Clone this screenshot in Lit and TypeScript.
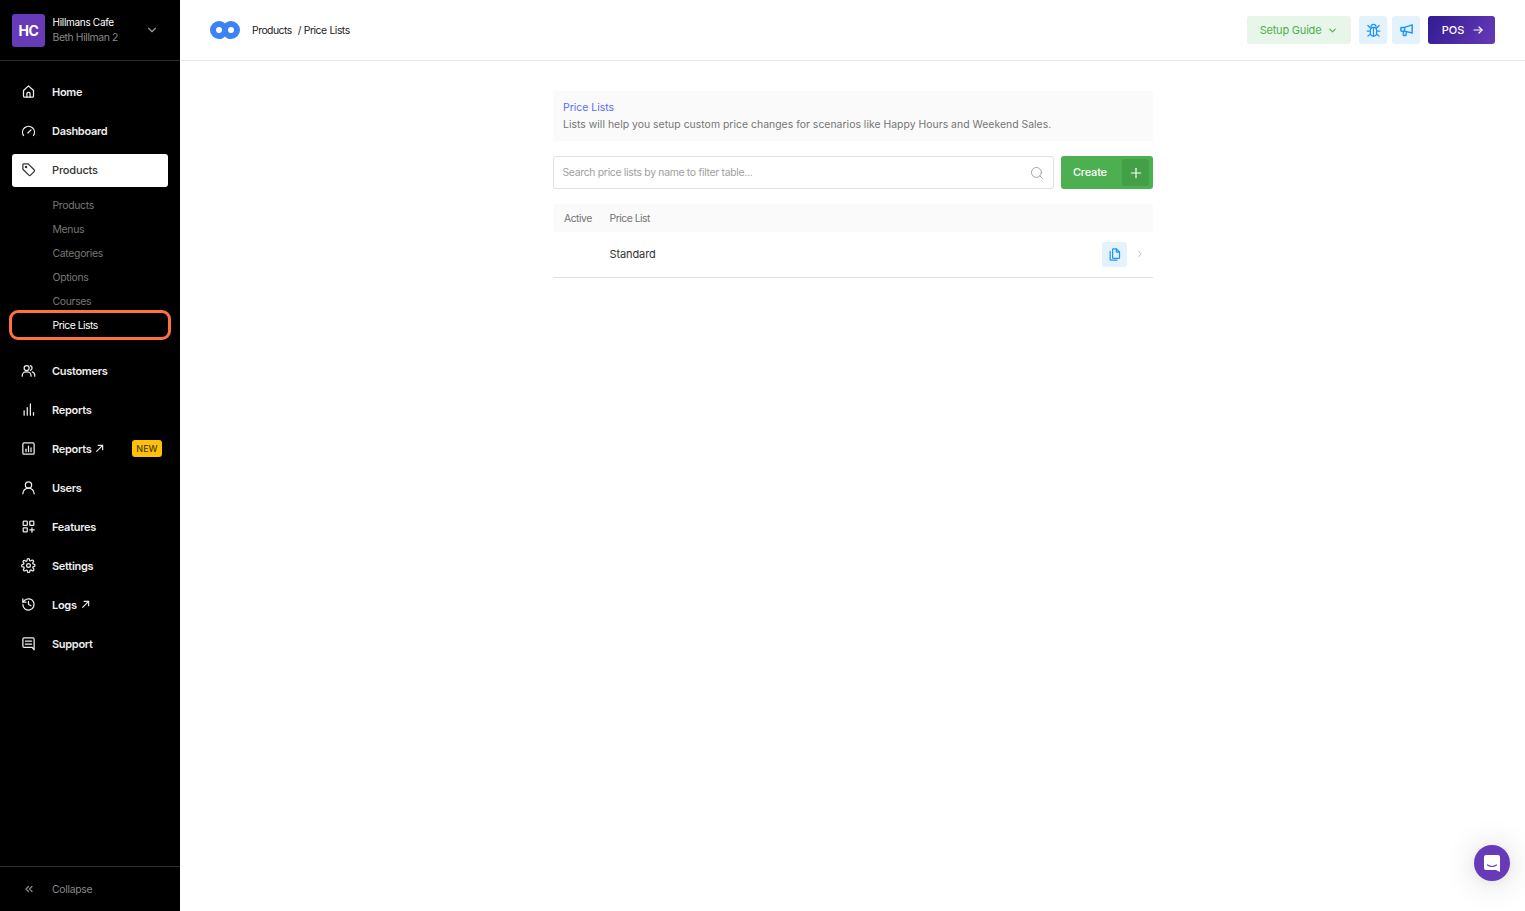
import { LitElement, html, css, svg } from "lit";
import { customElement } from "lit/decorators.js";

const ic = (body: unknown, size = 16, sw = 2) => html`<svg width=${size} height=${size} viewBox="0 0 24 24" fill="none" stroke="currentColor" stroke-width=${sw} stroke-linecap="round" stroke-linejoin="round">${body}</svg>`;

const icons: Record<string, unknown> = {
  home: svg`<path d="M4 10.500 12 3l8 7.500V19a2 2 0 0 1-2 2H6a2 2 0 0 1-2-2z"/><path d="M9.500 21v-6a1.500 1.500 0 0 1 1.500-1.500h2a1.500 1.500 0 0 1 1.500 1.500v6"/>`,
  dash: svg`<path d="M4 20a9.500 9.500 0 1 1 16 0"/><path d="m11 16 5-5"/>`,
  tag: svg`<path d="M3 4.500A1.500 1.500 0 0 1 4.500 3h7l9.500 9.500a2 2 0 0 1 0 2.800L15.300 21a2 2 0 0 1-2.800 0L3 11.500z"/><circle cx="8" cy="8" r="1"/>`,
  users: svg`<circle cx="9" cy="8" r="4"/><path d="M2 21v-1a6 6 0 0 1 6-6h2a6 6 0 0 1 6 6v1"/><path d="M15 4.200a4 4 0 0 1 0 7.600"/><path d="M18 14.300a6 6 0 0 1 4 5.700v1"/>`,
  bars: svg`<path d="M5 21v-7"/><path d="M10 21V9"/><path d="M15 21V3"/><path d="M20 21v-4"/>`,
  chart: svg`<rect x="3" y="3" width="18" height="18" rx="2"/><path d="M8 17v-4"/><path d="M12 17V8"/><path d="M16 17v-6"/>`,
  user: svg`<circle cx="12" cy="8" r="5"/><path d="M3 22a9 9 0 0 1 18 0"/>`,
  features: svg`<rect x="3.500" y="3.500" width="6.500" height="6.500" rx="1"/><rect x="14" y="3.500" width="6.500" height="6.500" rx="1"/><rect x="3.500" y="14" width="6.500" height="6.500" rx="1"/><path d="M17.500 14v7"/><path d="M14 17.500h7"/>`,
  gear: svg`<circle cx="12" cy="12" r="3"/><path d="M19.400 15a1.600 1.600 0 0 0 .3 1.800l.1.1a2 2 0 1 1-2.800 2.800l-.1-.1a1.600 1.600 0 0 0-2.700 1.100V21a2 2 0 0 1-4 0v-.1a1.600 1.600 0 0 0-2.700-1.100l-.1.1a2 2 0 1 1-2.800-2.800l.1-.1a1.600 1.600 0 0 0-1.100-2.700H3a2 2 0 0 1 0-4h.1a1.600 1.600 0 0 0 1.100-2.700l-.1-.1a2 2 0 1 1 2.800-2.800l.1.1a1.600 1.600 0 0 0 2.700-1.100V3a2 2 0 0 1 4 0v.1a1.600 1.600 0 0 0 2.700 1.100l.1-.1a2 2 0 1 1 2.800 2.800l-.1.1a1.600 1.600 0 0 0 1.100 2.700h.1a2 2 0 0 1 0 4h-.1a1.600 1.600 0 0 0-1.500 1.300z"/>`,
  history: svg`<path d="M3 12a9 9 0 1 0 3-6.700L3 8"/><path d="M3 3v5h5"/><path d="M12 7v5l4 2"/>`,
  support: svg`<path d="M21 22V5a2 2 0 0 0-2-2H5a2 2 0 0 0-2 2v11a2 2 0 0 0 2 2h13z"/><path d="M7 8h10"/><path d="M7 13h10"/>`,
};

const nav1 = [["home", "Home"], ["dash", "Dashboard"]];
const sub = ["Products", "Menus", "Categories", "Options", "Courses", "Price Lists"];
const nav2: [string, string, boolean?, boolean?][] = [
  ["users", "Customers"],
  ["bars", "Reports"],
  ["chart", "Reports", true, true],
  ["user", "Users"],
  ["features", "Features"],
  ["gear", "Settings"],
  ["history", "Logs", true],
  ["support", "Support"],
];

const ext = html`<svg class="ext" width="9" height="9" viewBox="0 0 10 10" fill="none" stroke="currentColor" stroke-width="1.300"><path d="M1.500 8.500 8.500 1.500"/><path d="M3 1.500h5.500V7"/></svg>`;

@customElement("app-root")
export class AppRoot extends LitElement {
  static styles = css`
    :host { display: flex; width: 1525px; height: 911px; overflow: hidden; background: #fff; font-family: Inter, "Liberation Sans", sans-serif; position: relative; color: #333; }
    * { box-sizing: border-box; }
    .side { width: 180px; flex: none; height: 911px; background: #000; color: #fff; display: flex; flex-direction: column; }
    .acct { height: 61px; flex: none; border-bottom: 1px solid #2b2b2b; display: flex; align-items: center; padding: 0 12px; gap: 7.5px; }
    .avatar { width: 33px; height: 33px; border-radius: 3px; background: #673ab7; display: flex; align-items: center; justify-content: center; font: 700 14px Inter, sans-serif; color: #fff; letter-spacing: -0.3px; }
    .acct-t { flex: 1; font-size: 10px; line-height: 15px; letter-spacing: -0.3px; }
    .acct-t div:last-child { color: #8a8a8a; font-size: 10.4px; letter-spacing: -0.4px; }
    .chev { color: #999; display: flex; margin-right: 9px; }
    nav { padding: 14px 12px 0; flex: 1; }
    .item { height: 33px; display: flex; align-items: center; padding-left: 9px; gap: 16px; font-size: 11px; font-weight: 600; letter-spacing: -0.3px; border-radius: 3px; margin-bottom: 6px; color: #eee; position: relative; }
    .item svg:first-child { flex: none; }
    .item.on { background: #fff; color: #333; font-weight: 500; letter-spacing: -0.15px; margin-top: 7px; padding-bottom: 2px; }
    .lbl { display: flex; align-items: center; gap: 4px; }
    .subs { padding: 0 0 17px; }
    .s { height: 24px; display: flex; align-items: center; padding-left: 40.5px; font-size: 10.4px; color: #777; letter-spacing: -0.3px; position: relative; }
    .s.cur { color: #fff; letter-spacing: -0.5px; }
    .ring { position: absolute; left: -3px; right: -3px; top: -3px; bottom: -3px; border: 3px solid #ff7043; border-radius: 9px; }
    .new { position: absolute; right: 6px; top: 8px; width: 30px; height: 17px; border-radius: 3px; background: #ffc107; color: #4f3d00; font-size: 9px; display: flex; align-items: center; justify-content: center; font-weight: 500; letter-spacing: 0; }
    .coll { height: 45px; flex: none; border-top: 1px solid #2b2b2b; display: flex; align-items: center; padding-left: 23px; gap: 17px; color: #888; font-size: 10.4px; letter-spacing: -0.3px; }
    main { flex: 1; display: flex; flex-direction: column; min-width: 0; }
    header { height: 61px; flex: none; border-bottom: 1px solid #e6e6e6; display: flex; align-items: center; padding: 0 30px; }
    .crumb { margin-left: 12px; font-size: 10.4px; color: #222; letter-spacing: -0.5px; flex: 1; word-spacing: 0.5px; }
    .btn-setup { width: 104px; height: 28px; border-radius: 3px; background: #e8f5e9; color: #4caf50; font-size: 11px; display: flex; align-items: center; justify-content: center; gap: 6px; letter-spacing: -0.2px; margin-right: 8px; }
    .icon-b { width: 28px; height: 28px; border-radius: 3px; background: #e3f2fd; color: #2196f3; display: flex; align-items: center; justify-content: center; margin-right: 5px; }
    .icon-b + .pos { margin-left: 3px; }
    .pos { width: 67px; height: 28px; border-radius: 3px; background: linear-gradient(120deg, #311b92, #673ab7); color: #fff; font-size: 11px; font-weight: 500; display: flex; align-items: center; justify-content: center; gap: 8px; padding-left: 3px; }
    .content { width: 600px; margin: 30px 0 0 373px; }
    .info { height: 50px; background: #fafafa; border-radius: 3px; padding: 8px 10px 0; font-size: 10.4px; line-height: 17px; color: #757575; letter-spacing: 0.03px; }
    .info b { display: block; font-weight: 400; color: #536dfe; }
    .tools { display: flex; margin-top: 15px; gap: 7px; }
    .search { flex: 1; height: 33px; border: 1px solid #e0e0e0; border-radius: 3px; display: flex; align-items: center; justify-content: space-between; padding: 0 9px 0 8.5px; color: #9e9e9e; font-size: 10.4px; letter-spacing: -0.3px; }
    .create { width: 92px; height: 33px; border-radius: 3px; background: #4caf50; color: #fff; font-size: 11px; font-weight: 500; display: flex; align-items: center; justify-content: space-between; padding: 3px 4px 3px 12px; letter-spacing: -0.2px; }
    .create em { font-style: normal; margin-top: -1px; }
    .create span { width: 27px; height: 27px; background: #43a047; border-radius: 3px; display: flex; align-items: center; justify-content: center; }
    .thead { margin-top: 15px; height: 28px; background: #fafafa; border-radius: 3px; display: flex; align-items: center; font-size: 10.4px; color: #757575; padding-left: 11px; letter-spacing: -0.5px; }
    .thead span:first-child { width: 45.5px; }
    .row { height: 46px; border-bottom: 1px solid #e0e0e0; display: flex; align-items: center; padding: 0 0 1px 56.5px; font-size: 11px; color: #333; letter-spacing: -0.1px; }
    .row .n { flex: 1; }
    .copy { width: 25px; height: 25px; background: #e3f2fd; color: #2196f3; border-radius: 3px; display: flex; align-items: center; justify-content: center; margin-right: 8px; }
    .rc { color: #bdbdbd; display: flex; margin-right: 8px; }
    .chat { position: absolute; right: 15px; bottom: 30px; width: 36px; height: 36px; border-radius: 50%; background: #673ab7; display: flex; align-items: center; justify-content: center; box-shadow: 0 1px 6px rgba(0,0,0,.06), 0 2px 32px rgba(0,0,0,.16); }
  `;

  render() {
    return html`
      <aside class="side">
        <div class="acct">
          <div class="avatar">HC</div>
          <div class="acct-t"><div>Hillmans Cafe</div><div>Beth Hillman 2</div></div>
          <span class="chev">${ic(svg`<path d="m6 9 6 6 6-6"/>`, 14)}</span>
        </div>
        <nav>
          ${nav1.map(([i, l]) => html`<div class="item">${ic(icons[i], 15)}<span class="lbl">${l}</span></div>`)}
          <div class="item on">${ic(icons.tag, 15)}<span class="lbl">Products</span></div>
          <div class="subs">
            ${sub.map((s, i) => html`<div class="s ${i === 5 ? "cur" : ""}">${s}${i === 5 ? html`<div class="ring"></div>` : ""}</div>`)}
          </div>
          ${nav2.map(([i, l, e, n]) => html`<div class="item">${ic(icons[i], 15)}<span class="lbl">${l}${e ? ext : ""}</span>${n ? html`<span class="new">NEW</span>` : ""}</div>`)}
        </nav>
        <div class="coll">${ic(svg`<path d="m11 17-5-5 5-5"/><path d="m18 17-5-5 5-5"/>`, 12, 2.6)}<span>Collapse</span></div>
      </aside>
      <main>
        <header>
          <svg width="30" height="18" viewBox="0 0 30 18"><path fill="#3b82f6" d="M9 0c2.500 0 4.600 1 6 2.600C16.400 1 18.500 0 21 0a9 9 0 0 1 0 18c-2.500 0-4.600-1-6-2.600C13.600 17 11.500 18 9 18A9 9 0 0 1 9 0z"/><circle cx="9" cy="9" r="3" fill="#fff"/><circle cx="21" cy="9" r="3" fill="#fff"/></svg>
          <div class="crumb">Products &nbsp;/ Price Lists</div>
          <div class="btn-setup">Setup Guide ${ic(svg`<path d="m6 9 6 6 6-6"/>`, 11, 2.4)}</div>
          <div class="icon-b">${ic(svg`<path d="M8 7V6a4 4 0 0 1 8 0v1"/><rect x="7" y="7" width="10" height="14" rx="5"/><path d="M12 7v14"/><path d="M3 4l4 4"/><path d="M21 4l-4 4"/><path d="M2 13h5"/><path d="M22 13h-5"/><path d="M3 21l4-3.500"/><path d="M21 21l-4-3.500"/>`, 15)}</div>
          <div class="icon-b">${ic(svg`<path d="M21 3v13L9 13H4a1 1 0 0 1-1-1V8a1 1 0 0 1 1-1h5z"/><path d="M9 7v6"/><path d="M7 13v7h4l1-6"/>`, 15, 2.4)}</div>
          <div class="pos">POS ${ic(svg`<path d="M4 12h16"/><path d="m14 6 6 6-6 6"/>`, 12, 2.4)}</div>
        </header>
        <div class="content">
          <div class="info"><b>Price Lists</b>Lists will help you setup custom price changes for scenarios like Happy Hours and Weekend Sales.</div>
          <div class="tools">
            <div class="search"><span>Search price lists by name to filter table...</span>${ic(svg`<circle cx="11" cy="11" r="8.500"/><path d="m21 21-3.800-3.800"/>`, 14, 1.6)}</div>
            <div class="create"><em>Create</em><span>${ic(svg`<path d="M12 4v16"/><path d="M4 12h16"/>`, 14)}</span></div>
          </div>
          <div class="thead"><span>Active</span><span>Price List</span></div>
          <div class="row">
            <span class="n">Standard</span>
            <span class="copy">${ic(svg`<path d="M9 17V4a1 1 0 0 1 1-1h5l5 5v9a1 1 0 0 1-1 1h-9a1 1 0 0 1-1-1z"/><path d="M15 3v5h5"/><path d="M5 7v13a1 1 0 0 0 1 1h10"/>`, 15)}</span>
            <span class="rc">${ic(svg`<path d="m9 6 6 6-6 6"/>`, 10, 2.4)}</span>
          </div>
        </div>
      </main>
      <div class="chat"><svg width="18" height="19" viewBox="0 0 18 19"><path fill="#fff" d="M3 1h12a2 2 0 0 1 2 2v15l-4-2H3a2 2 0 0 1-2-2V3a2 2 0 0 1 2-2z"/><path d="M4.500 11c3 2 6 2 9 0" fill="none" stroke="#673ab7" stroke-width="1.200" stroke-linecap="round"/></svg></div>
    `;
  }
}
